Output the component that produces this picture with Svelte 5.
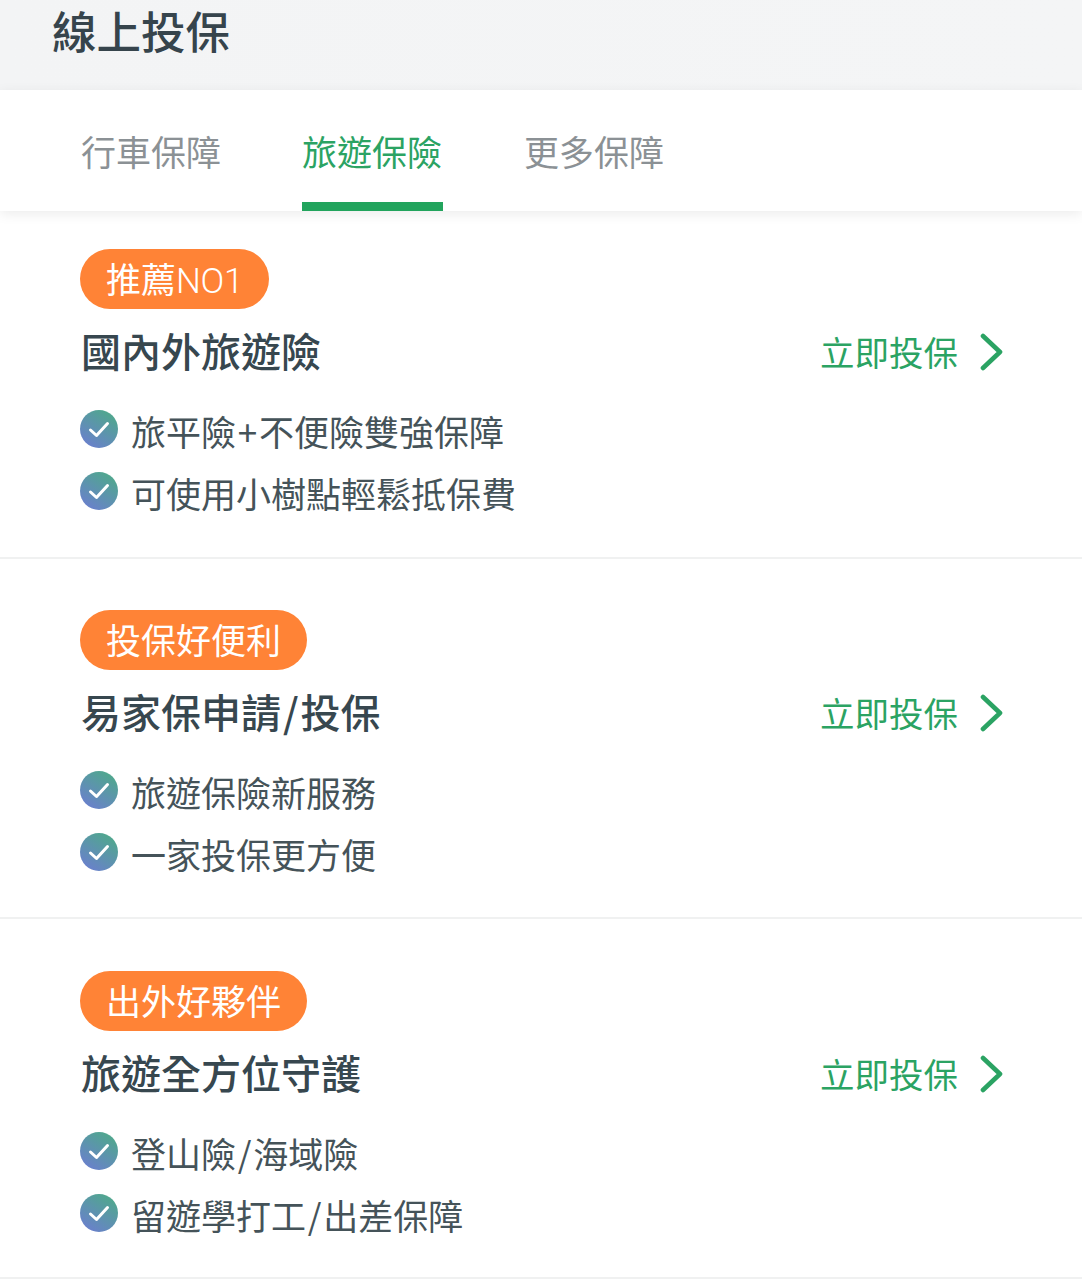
<script>
	const tabs = ['行車保障', '旅遊保險', '更多保障'];
	const plans = [
		{ badge: '推薦NO1', title: '國內外旅遊險', items: ['旅平險+不便險雙強保障', '可使用小樹點輕鬆抵保費'] },
		{ badge: '投保好便利', title: '易家保申請/投保', items: ['旅遊保險新服務', '一家投保更方便'] },
		{ badge: '出外好夥伴', title: '旅遊全方位守護', items: ['登山險/海域險', '留遊學打工/出差保障'] }
	];

	// the original font sets latin runs and symbols differently from the CJK
	const split = (text) => text.split(/([+/]|NO1)/).filter(Boolean);
	const kind = (part) => (part === 'NO1' ? 'latin' : part === '+' || part === '/' ? 'sym' : '');
</script>

{#snippet mixed(text)}{#each split(text) as part}<span class={kind(part)}>{part}</span>{/each}{/snippet}

<div class="page">
	<header class="top">
		<h1>線上投保</h1>
	</header>

	<nav class="tabs">
		{#each tabs as tab, i}
			<div class="tab" class:active={i === 1}>{tab}</div>
		{/each}
	</nav>

	<main>
		{#each plans as plan, p}
			<section class="plan">
				<span class="badge">{@render mixed(plan.badge)}</span>
				<div class="head">
					<h2>{@render mixed(plan.title)}</h2>
					<div class="cta">
						<span class="cta-label">立即投保</span>
						<svg width="24" height="38" viewBox="0 0 24 38">
							<path d="M3 3 L20 19 L3 35" fill="none" stroke="#2ba363" stroke-width="4.6" stroke-linecap="round" stroke-linejoin="round" />
						</svg>
					</div>
				</div>
				<ul>
					{#each plan.items as item, n}
						<li>
							<svg class="check" width="38" height="38" viewBox="0 0 38 38">
								<defs>
									<linearGradient id="grad-{p}-{n}" x1="0.8" y1="0.05" x2="0.2" y2="0.95">
										<stop offset="0" stop-color="#4fa88c" />
										<stop offset="1" stop-color="#6a80cc" />
									</linearGradient>
								</defs>
								<circle cx="19" cy="19" r="19" fill="url(#grad-{p}-{n})" />
								<path d="M10.5 20 L16.5 25.5 L27.5 13.5" fill="none" stroke="#fff" stroke-width="3" stroke-linecap="round" stroke-linejoin="round" />
							</svg>
							<span class="text">{@render mixed(item)}</span>
						</li>
					{/each}
				</ul>
			</section>
		{/each}
	</main>
</div>

<style>
	:global(body) {
		background: #fff;
	}

	.page {
		width: 1082px;
		height: 1280px;
		overflow: hidden;
		font-family: 'Noto Sans CJK TC', 'Noto Sans', sans-serif;
		color: #37474f;
	}

	.top {
		height: 90px;
		padding-left: 52px;
		box-sizing: border-box;
		background: linear-gradient(90deg, #f3f4f5, #f4f5f6);
	}

	h1 {
		margin: 0;
		font-size: 44.5px;
		font-weight: 500;
		line-height: 60px;
		color: #36444c;
	}

	.tabs {
		position: relative;
		display: flex;
		gap: 81px;
		height: 121px;
		box-sizing: border-box;
		padding-left: 81px;
		background: #fff;
		box-shadow: 0 3px 12px rgba(0, 0, 0, 0.08);
	}

	.tab {
		height: 121px;
		box-sizing: border-box;
		padding-top: 35px;
		font-size: 35px;
		line-height: 52px;
		color: #8b9195;
	}

	.tab.active {
		padding-right: 1px;
		color: #2ba363;
		border-bottom: 9px solid #22a45d;
	}

	.plan {
		display: flex;
		flex-direction: column;
		align-items: flex-start;
		height: 360px;
		box-sizing: border-box;
		padding: 52px 78px 0 80px;
		border-bottom: 2px solid #f0f1f1;
	}

	.plan:first-child {
		height: 348px;
		padding-top: 38px;
	}

	.plan:nth-child(2) {
		padding-top: 51px;
	}

	.badge {
		height: 60px;
		padding: 0 26px;
		border-radius: 30px;
		background: #ff8336;
		color: #fff;
		font-size: 35px;
		line-height: 57px;
	}

	.latin {
		font-family: Roboto, sans-serif;
		font-weight: 300;
		font-size: 35px;
		letter-spacing: -0.3px;
	}

	.sym {
		margin: 0 0.05em;
	}

	.head {
		align-self: stretch;
		display: flex;
		justify-content: space-between;
		align-items: center;
		height: 60px;
		margin-top: 13px;
	}

	h2 {
		margin: 0 0 0 1px;
		padding-bottom: 4px;
		font-size: 40px;
		font-weight: 500;
		line-height: 56px;
		color: #37474f;
	}

	.cta {
		display: flex;
		align-items: center;
		gap: 22px;
		font-size: 34.5px;
		line-height: 58px;
		color: #2ba363;
	}

	.cta-label {
		padding-bottom: 2px;
	}

	ul {
		list-style: none;
		margin: 19px 0 0;
		padding: 0;
	}

	li {
		display: flex;
		align-items: flex-start;
		gap: 13px;
		height: 62px;
		font-size: 35px;
		line-height: 60px;
		color: #455359;
	}

	.check {
		margin-top: 9px;
		flex: none;
	}
</style>
